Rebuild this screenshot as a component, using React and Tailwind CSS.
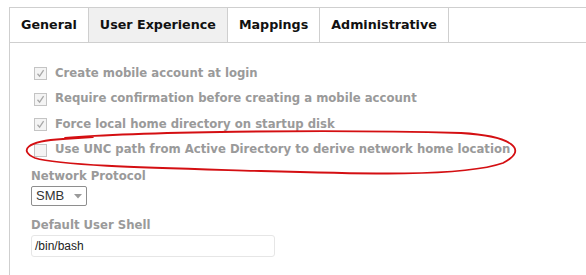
const tabs = ['General', 'User Experience', 'Mappings', 'Administrative'];

const options = [
  { label: 'Create mobile account at login', checked: true },
  { label: 'Require confirmation before creating a mobile account', checked: true },
  { label: 'Force local home directory on startup disk', checked: true },
  { label: 'Use UNC path from Active Directory to derive network home location', checked: false },
];

const Checkbox = ({ checked }) => (
  <span className="w-[13px] h-[13px] border border-[#c4c4c4] bg-[#f4f4f4] flex items-center justify-center shrink-0">
    {checked && (
      <svg width="9" height="9" viewBox="0 0 9 9">
        <path d="M1.5 4.8 L3.6 7.2 L7.6 1.2" fill="none" stroke="#a8a8a8" strokeWidth="1.3" />
      </svg>
    )}
  </span>
);

export default function App() {
  return (
    <div className="w-[586px] h-[275px] bg-white pt-[7px] pl-[9px] overflow-hidden font-['DejaVu_Sans',sans-serif]">
      <div className="relative border-l border-[#cfcfcf] h-[268px]">
        <div className="flex h-[36px] border-y border-[#cfcfcf]">
          {tabs.map((t) => (
            <div
              key={t}
              className={`flex items-center px-[11px] border-r border-[#cfcfcf] text-[12.7px] font-bold text-[#111] ${t === 'User Experience' ? 'bg-[#f0f0f0]' : 'bg-white'}`}
            >
              {t}
            </div>
          ))}
        </div>

        <div className="pl-[24px] pt-[18px] flex flex-col">
          {options.map((o) => (
            <div key={o.label} className="flex items-center gap-[8px] h-[25.5px]">
              <Checkbox checked={o.checked} />
              <span className="text-[11.7px] font-bold text-[#9a9a9a] whitespace-nowrap">{o.label}</span>
            </div>
          ))}

          <div className="-ml-[3px] mt-[4px] text-[11.7px] font-bold text-[#9a9a9a] leading-[18px]">Network Protocol</div>
          <div className="-ml-[3px] mt-[1px] w-[56px] h-[20px] border border-[#8e8e8e] rounded-[2px] flex items-center justify-between px-[4px] font-['Liberation_Sans',sans-serif] text-[13px] text-[#333]">
            <span>SMB</span>
            <svg width="8" height="5" viewBox="0 0 8 5">
              <path d="M0 0 H8 L4 4.5 Z" fill="#9a9a9a" />
            </svg>
          </div>

          <div className="-ml-[3px] mt-[10px] text-[11.7px] font-bold text-[#9a9a9a] leading-[18px]">Default User Shell</div>
          <div className="-ml-[3px] mt-[1px] w-[244px] h-[22px] border border-[#e6e6e6] rounded-[3px] flex items-center px-[3px] font-['Liberation_Sans',sans-serif] text-[12px] text-[#222]">
            /bin/bash
          </div>
        </div>

        <svg className="absolute left-[-9px] top-[-7px] pointer-events-none" width="586" height="275" viewBox="0 0 586 275">
          <path
            d="M64 138 C 130 132, 320 129, 460 133 C 512 136, 528 150, 502 163 C 462 177, 360 174, 260 171 C 160 168, 60 166, 34 158 C 18 151, 24 141, 62 139 L 92 137"
            fill="none"
            stroke="#d40f12"
            strokeWidth="1.8"
            strokeLinecap="round"
          />
        </svg>
      </div>
    </div>
  );
}
